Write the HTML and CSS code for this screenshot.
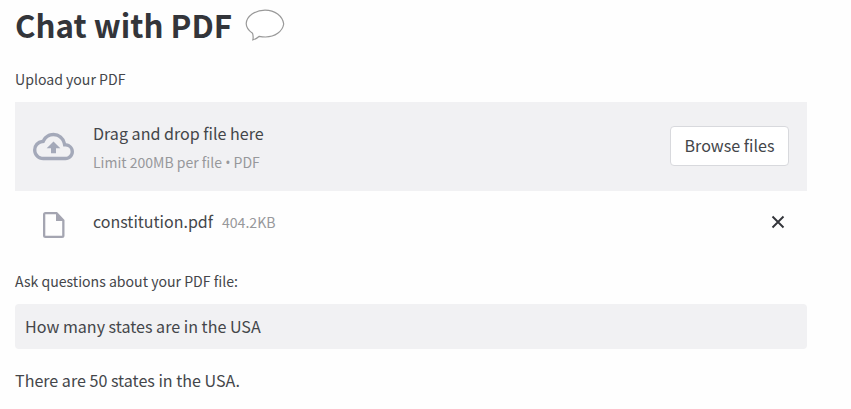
FILE: index.html
```html
<!DOCTYPE html>
<html lang="en">
<head>
<meta charset="utf-8">
<title>Chat with PDF</title>
<link rel="stylesheet" href="styles.css">
</head>
<body>
<main class="page">
  <h1 class="title"><span>Chat with PDF</span>
    <svg class="bubble" width="40" height="34" viewBox="0 0 40 34"><path d="M7.5 24.2C3.500 21.500 1.200 18 1.200 14.500C1.800 7 10 1.200 20 1.200S37.500 7 38.700 15C37.500 22.500 30 28 20.500 28C18 28 16 27.700 14.300 27.300C12.500 29 10.500 30.300 7.800 30.800C8.500 28.500 8.200 26.500 7.500 24.200Z"/></svg>
  </h1>
  <label class="label upload-label"><span>Upload your PDF</span></label>
  <section class="dropzone">
    <svg class="cloud" width="41" height="41" viewBox="0 0 24 24"><path d="M19.350 10.040A7.490 7.490 0 0 0 12 4C9.110 4 6.600 5.640 5.350 8.040A5.994 5.994 0 0 0 0 14c0 3.310 2.690 6 6 6h13c2.760 0 5-2.240 5-5 0-2.640-2.050-4.780-4.650-4.960zM19 18H6c-2.210 0-4-1.790-4-4 0-2.050 1.530-3.760 3.560-3.970l1.070-.110.500-.950A5.469 5.469 0 0 1 12 6c2.620 0 4.880 1.860 5.390 4.430l.300 1.500 1.530.110A2.980 2.980 0 0 1 22 15c0 1.650-1.350 3-3 3zM8 13h2.550v3h2.900v-3H16l-4-4z"/></svg>
    <div class="hint">
      <div class="hint-main"><span>Drag and drop file here</span></div>
      <div class="hint-limit"><span>Limit 200MB per file <span class="dot">•</span> PDF</span></div>
    </div>
    <button class="browse"><span>Browse files</span></button>
  </section>
  <div class="file">
    <svg class="doc" width="24" height="28" viewBox="0 0 24 28"><path fill-rule="evenodd" d="M3.500 1H15L22.500 9V24.500Q22.500 27 20 27H3.500Q1 27 1 24.500V3.500Q1 1 3.500 1ZM3.300 3.300V24.700H20.200V10H14V3.300Z"/></svg>
    <span class="name">constitution.pdf</span>
    <span class="size">404.2KB</span>
    <svg class="close" width="14" height="14" viewBox="0 0 14 14"><path d="M1.500 1.500L12.500 12.500M12.500 1.500L1.500 12.500"/></svg>
  </div>
  <label class="label ask-label"><span>Ask questions about your PDF file:</span></label>
  <div class="input"><span>How many states are in the USA</span></div>
  <p class="answer"><span>There are 50 states in the USA.</span></p>
</main>
</body>
</html>
```
FILE: styles.css
```css
* { box-sizing: border-box; }
body {
  margin: 0;
  height: 409px;
  overflow: hidden;
  background: #fefefe;
  color: #44464a;
  font: 16.08px/24px "Noto Sans CJK SC", "Open Sans", sans-serif;
  white-space: nowrap;
}
.page { width: 807px; padding: 1px 0 0 15px; }
.title {
  display: flex;
  align-items: center;
  height: 48px;
  margin: 0;
  color: #33353a;
  font-size: 31.3px;
  line-height: 48px;
  font-weight: 700;
}
.bubble { margin: 1px 0 0 13px; fill: #fff; stroke: #999; stroke-width: 1.2; }
.label { display: block; height: 20px; font-size: 14.1px; line-height: 20px; }
.upload-label { margin-top: 20px; }
.dropzone {
  display: flex;
  align-items: center;
  height: 89px;
  margin-top: 13px;
  padding: 0 18px 2px;
  background: #f1f1f3;
}
.cloud { margin-top: 1px; fill: #a4a9b9; }
.hint { margin: 3px 0 0 19px; }
.hint-main { height: 28px; line-height: 27px; }
.hint-limit { height: 27px; color: #97989b; font-size: 14.02px; line-height: 28px; }
.dot { font-family: "Open Sans", sans-serif; line-height: 1; }
.browse {
  width: 119px;
  height: 40px;
  margin-left: auto;
  padding: 0 0 2px;
  border: 1px solid #d8d9dd;
  border-radius: 4px;
  background: #fff;
  color: inherit;
  font: inherit;
}
.file { display: flex; align-items: center; height: 62px; padding: 0 22px 0 27px; }
.doc { margin-top: 6px; fill: #a4a5b1; }
.name { margin: -2px 0 0 27px; font-size: 16px; }
.size { margin-left: 9px; color: #97989b; font-size: 14.1px; }
.close { margin-left: auto; fill: none; stroke: #33353a; stroke-width: 1.9; }
.ask-label { margin-top: 18px; }
.input {
  height: 45px;
  margin-top: 13px;
  padding: 0 10px;
  border-radius: 4px;
  background: #f1f1f3;
  line-height: 45px;
}
.answer { margin: 19px 0 0; line-height: 24px; }
```
